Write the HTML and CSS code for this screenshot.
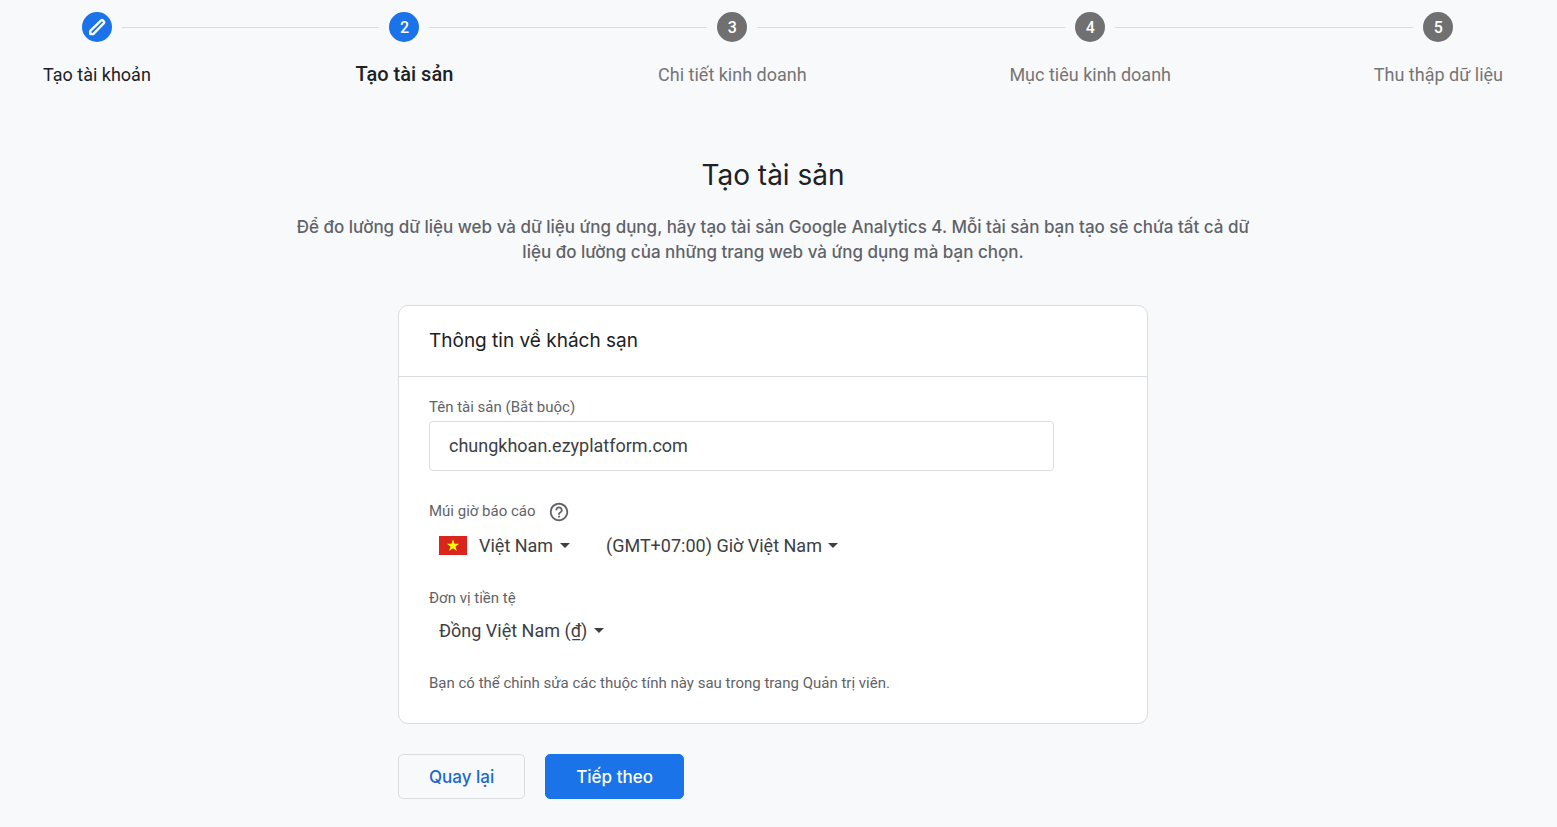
FILE: index.html
```html
<!DOCTYPE html>
<html lang="vi">
<head>
<meta charset="UTF-8">
<meta name="viewport" content="width=device-width, initial-scale=1">
<title>Tạo tài sản</title>
<link rel="stylesheet" href="styles.css">
</head>
<body>
<ol class="stepper">
    <li class="step done">
        <div class="step-track">
            <span class="step-icon">
                <svg width="20" height="20" viewBox="0 0 24 24" fill="none" stroke="currentColor" stroke-width="2.8" stroke-linejoin="round" aria-hidden="true"><path d="M4 20.500v-3.900L17 4.100q1-.9 2 0l1.300 1.300q.9 1 0 2L7.500 20.500z"/></svg>
            </span>
        </div>
        <span class="step-label">Tạo tài khoản</span>
    </li>
    <li class="line" aria-hidden="true"></li>
    <li class="step active" aria-current="step">
        <div class="step-track"><span class="step-icon">2</span></div>
        <span class="step-label">Tạo tài sản</span>
    </li>
    <li class="line" aria-hidden="true"></li>
    <li class="step">
        <div class="step-track"><span class="step-icon">3</span></div>
        <span class="step-label">Chi tiết kinh doanh</span>
    </li>
    <li class="line" aria-hidden="true"></li>
    <li class="step">
        <div class="step-track"><span class="step-icon">4</span></div>
        <span class="step-label">Mục tiêu kinh doanh</span>
    </li>
    <li class="line" aria-hidden="true"></li>
    <li class="step">
        <div class="step-track"><span class="step-icon">5</span></div>
        <span class="step-label">Thu thập dữ liệu</span>
    </li>
</ol>

<main>
    <h1>Tạo tài sản</h1>
    <p class="intro">Để đo lường dữ liệu web và dữ liệu ứng dụng, hãy tạo tài sản Google Analytics 4. Mỗi tài sản bạn tạo sẽ chứa tất cả dữ liệu đo lường của những trang web và ứng dụng mà bạn chọn.</p>

    <form class="property-form">
        <section class="card">
            <h2>Thông tin về khách sạn</h2>
            <div class="card-body">
                <div class="field">
                    <label for="propertyName">Tên tài sản (Bắt buộc)</label>
                    <input type="text" id="propertyName" value="chungkhoan.ezyplatform.com">
                </div>

                <div class="field">
                    <div class="label-row">
                        <label for="country">Múi giờ báo cáo</label>
                        <svg class="help" width="22" height="22" viewBox="0 0 24 24" fill="currentColor" aria-hidden="true"><path d="M11 18h2v-2h-2v2zm1-16C6.48 2 2 6.48 2 12s4.48 10 10 10 10-4.48 10-10S17.52 2 12 2zm0 18c-4.41 0-8-3.59-8-8s3.59-8 8-8 8 3.59 8 8-3.59 8-8 8zm0-14c-2.21 0-4 1.79-4 4h2c0-1.1.9-2 2-2s2 .9 2 2c0 2-3 1.75-3 5h2c0-2.25 3-2.5 3-5 0-2.21-1.79-4-4-4z"/></svg>
                    </div>
                    <div class="pickers">
                        <div class="picker">
                            <svg class="flag" width="28" height="19" viewBox="0 0 28 19" aria-hidden="true"><rect width="28" height="19" fill="#da251d"/><path fill="#ff0" d="M14 3.200l1.500 4.600h4.700l-3.800 2.800 1.500 4.500-3.900-2.800-3.900 2.800 1.500-4.500-3.800-2.800h4.700z"/></svg>
                            <div class="dropdown">
                                <select id="country"><option>Việt Nam</option></select>
                                <svg class="caret" width="10" height="5" viewBox="0 0 10 5" fill="currentColor" aria-hidden="true"><path d="M0 0h10L5 5z"/></svg>
                            </div>
                        </div>
                        <div class="dropdown">
                            <select id="timezone" aria-label="Múi giờ"><option>(GMT+07:00) Giờ Việt Nam</option></select>
                            <svg class="caret" width="10" height="5" viewBox="0 0 10 5" fill="currentColor" aria-hidden="true"><path d="M0 0h10L5 5z"/></svg>
                        </div>
                    </div>
                </div>

                <div class="field">
                    <label for="currency">Đơn vị tiền tệ</label>
                    <div class="pickers">
                        <div class="dropdown">
                            <select id="currency"><option>Đồng Việt Nam (₫)</option></select>
                            <svg class="caret" width="10" height="5" viewBox="0 0 10 5" fill="currentColor" aria-hidden="true"><path d="M0 0h10L5 5z"/></svg>
                        </div>
                    </div>
                </div>

                <p class="note">Bạn có thể chỉnh sửa các thuộc tính này sau trong trang Quản trị viên.</p>
            </div>
        </section>

        <div class="actions">
            <button type="button" class="btn">Quay lại</button>
            <button type="button" class="btn btn-primary">Tiếp theo</button>
        </div>
    </form>
</main>
</body>
</html>
```
FILE: styles.css
```css
* {
    box-sizing: border-box;
}
body {
    margin: 0;
    padding-right: 11px;
    background-color: #f8f9fb;
    color: #202124;
    font-family: Roboto, sans-serif;
    font-size: 18px;
}

/* stepper */
.stepper {
    display: flex;
    margin: 0;
    padding: 12px 13px 0;
    list-style: none;
}
.step {
    color: #757575;
}
.step.done,
.step.active {
    color: #202124;
}
.step-track {
    display: flex;
    align-items: center;
    gap: 10px;
}
/* each step carries half a line on both sides of its circle */
.step-track::before,
.step-track::after {
    content: "";
    flex: 1;
    height: 1px;
    background-color: #dadce0;
}
.step:first-child .step-track::before,
.step:last-child .step-track::after {
    background-color: transparent;
}
.step-icon {
    display: flex;
    align-items: center;
    justify-content: center;
    width: 30px;
    height: 30px;
    border-radius: 50%;
    background-color: #707070;
    color: #fff;
    font-size: 16px;
    font-weight: 500;
}
.step.done .step-icon,
.step.active .step-icon {
    background-color: #1a73e8;
}
.step-label {
    display: block;
    margin-top: 20px;
    padding: 0 30px;
    line-height: 25px;
    white-space: nowrap;
}
.step.active .step-label {
    padding: 0 32px;
    font-size: 20px;
    font-weight: 500;
}
.line {
    flex: 1;
    height: 1px;
    margin-top: 15px;
    background-color: #dadce0;
}

/* heading */
main {
    padding: 68px 20px 28px;
}
h1 {
    margin: 0 0 20px;
    font-family: "Google Sans", Inter, sans-serif;
    font-size: 28px;
    font-weight: 400;
    line-height: 40px;
    text-align: center;
}
.intro {
    max-width: 980px;
    margin: 0 auto 40px;
    color: #5f6368;
    font-family: "Google Sans", Inter, sans-serif;
    font-size: 17px;
    font-weight: 500;
    line-height: 25px;
    text-align: center;
}

/* form */
.property-form {
    max-width: 750px;
    margin: 0 auto;
}
.card {
    border: 1px solid #dadce0;
    border-radius: 10px;
    background-color: #fff;
}
h2 {
    margin: 0;
    padding: 20px 30px;
    border-bottom: 1px solid #dadce0;
    font-family: "Google Sans", Inter, sans-serif;
    font-size: 19px;
    font-weight: 400;
    line-height: 30px;
}
.card-body {
    display: flex;
    flex-direction: column;
    gap: 30px;
    padding: 20px 30px 30px;
}
label,
.note {
    display: block;
    margin: 0;
    color: #5f6368;
    font-size: 15px;
    line-height: 20px;
}
.label-row {
    display: flex;
    gap: 12px;
}
.help {
    color: #5f6368;
}
input {
    display: block;
    width: 100%;
    max-width: 625px;
    height: 50px;
    margin-top: 4px;
    padding: 0 19px 2px;
    border: 1px solid #dadce0;
    border-radius: 4px;
    background-color: #fff;
    color: #3c4043;
    font: inherit;
}
.pickers {
    display: flex;
    flex-wrap: wrap;
    gap: 36px;
    margin-top: 10px;
    padding-left: 10px;
}
.picker {
    display: flex;
    align-items: center;
    gap: 12px;
}
.dropdown {
    position: relative;
    color: #3c4043;
}
select {
    display: block;
    height: 25px;
    padding: 0 16px 0 0;
    border: 0;
    appearance: none;
    background: none;
    color: inherit;
    font: inherit;
    cursor: pointer;
}
.caret {
    position: absolute;
    top: 10px;
    right: 0;
    pointer-events: none;
}

/* buttons */
.actions {
    display: flex;
    gap: 20px;
    margin-top: 30px;
}
.btn {
    height: 45px;
    padding: 0 30px;
    border: 1px solid #dadce0;
    border-radius: 5px;
    background: none;
    color: #1967d2;
    font-family: "Google Sans", Inter, sans-serif;
    font-size: 17px;
    font-weight: 500;
    cursor: pointer;
}
.btn-primary {
    border-color: #1a73e8;
    background-color: #1a73e8;
    color: #fff;
}
```
